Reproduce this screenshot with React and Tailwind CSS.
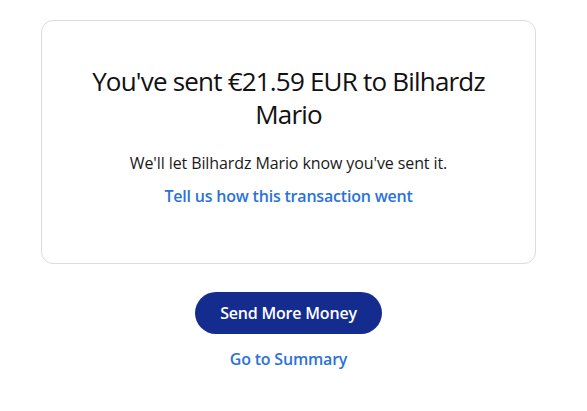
export default function App() {
  return (
    <div className="min-h-screen bg-white pl-[41px] pr-[51px] pt-[20px] font-['Open_Sans',sans-serif] text-[#1a1a1a]">
      {/* Confirmation card */}
      <div className="flex flex-col items-center rounded-[12px] border border-[#dcdcdc] px-4 pt-[44px] pb-[55px] text-center">
        <h1 className="text-[26px] leading-[33px] font-normal tracking-[-0.8px] text-[#111]">
          You've sent €21.59 EUR to Bilhardz Mario
        </h1>
        <p className="mt-[20px] text-[16px] leading-[24px] tracking-[-0.1px]">
          We'll let Bilhardz Mario know you've sent it.
        </p>
        <a className="mt-[9px] text-[16px] leading-[24px] font-semibold tracking-[-0.2px] text-[#2a72d8] cursor-pointer">
          Tell us how this transaction went
        </a>
      </div>

      {/* Actions */}
      <div className="flex flex-col items-center">
        <button className="mt-[28px] h-[42px] w-[187px] rounded-full bg-[#142c8e] text-[16px] font-semibold tracking-[-0.2px] text-white">
          Send More Money
        </button>
        <a className="mt-[13px] text-[16px] leading-[24px] font-semibold tracking-[-0.2px] text-[#2a72d8] cursor-pointer">
          Go to Summary
        </a>
      </div>
    </div>
  );
}
